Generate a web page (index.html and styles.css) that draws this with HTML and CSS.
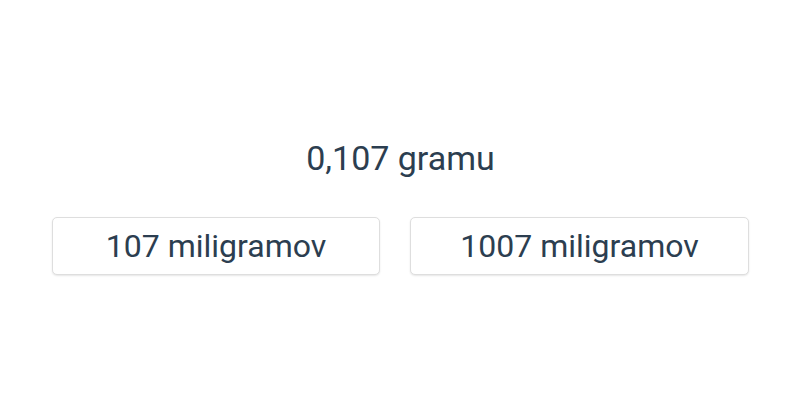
FILE: index.html
```html
<!DOCTYPE html>
<html lang="sk">
<head>
<meta charset="utf-8">
<link rel="stylesheet" href="styles.css">
</head>
<body>
<main class="quiz">
  <div class="question">0,107 gramu</div>
  <div class="answers">
    <button class="answer">107 miligramov</button>
    <button class="answer">1007 miligramov</button>
  </div>
</main>
</body>
</html>
```

FILE: styles.css
```css
html, body {
  margin: 0;
  padding: 0;
  background: #ffffff;
}
body {
  width: 800px;
  height: 400px;
  font-family: Roboto, "Liberation Sans", sans-serif;
  color: #2c3e50;
}
.quiz {
  display: flex;
  flex-direction: column;
  align-items: center;
  padding: 137px 51px 0 52px;
}
.question {
  font-size: 34px;
  line-height: 42px;
  text-align: center;
}
.answers {
  display: grid;
  grid-template-columns: 328fr 339fr;
  gap: 30px;
  margin-top: 38px;
  width: 100%;
}
.answer {
  font-family: inherit;
  font-size: 32px;
  line-height: 40px;
  color: #2c3e50;
  background: #ffffff;
  border: 1px solid #dedede;
  border-radius: 5px;
  padding: 8px 10px;
  box-shadow: 0 1px 2px rgba(0, 0, 0, 0.1);
  cursor: pointer;
}
```
